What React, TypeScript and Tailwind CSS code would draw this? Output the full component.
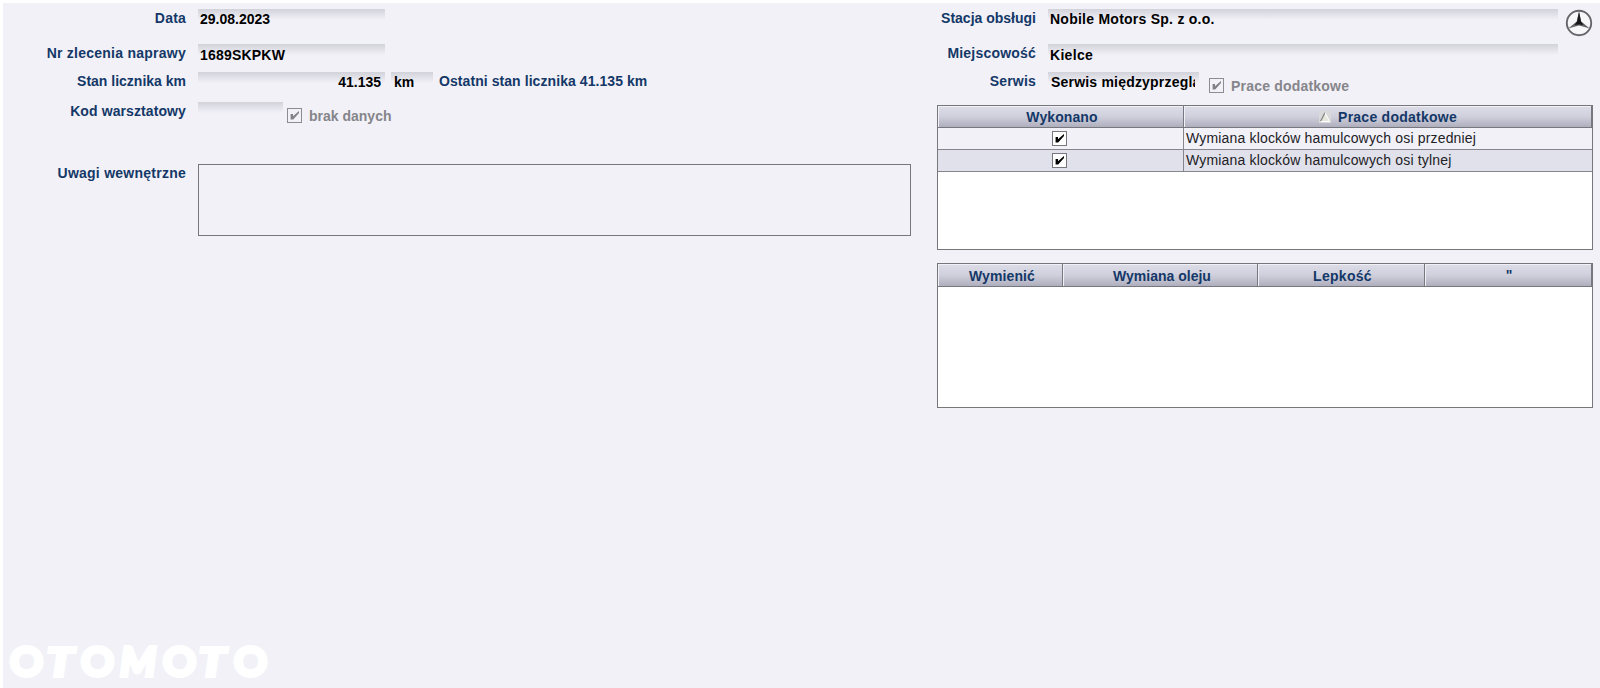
import type { ReactNode } from "react";
import clsx from "clsx";

interface FieldProps {
  className?: string;
  children?: ReactNode;
}

function Label({ className = "", children }: FieldProps) {
  return (
    <div
      className={`shrink-0 pt-px text-right text-[14px] leading-4 font-bold whitespace-nowrap text-[#143867] ${className}`}
    >
      {children}
    </div>
  );
}

function Field({ className = "pt-[3px]", children }: FieldProps) {
  return (
    <div
      className={`h-[22px] shrink-0 overflow-hidden bg-linear-to-b from-[#d2d2da] to-[#f2f1f8] to-[11px] text-[14px] leading-4 font-bold whitespace-nowrap text-black ${className}`}
    >
      {children}
    </div>
  );
}

function CheckBox({ disabled = false }: { disabled?: boolean }) {
  return (
    <svg width="15" height="15" viewBox="0 0 15 15" className="shrink-0">
      <rect
        x="0.5"
        y="0.5"
        width="14"
        height="14"
        fill={disabled ? "#f2f1f8" : "#ffffff"}
        stroke={disabled ? "#8c8c92" : "#77777d"}
      />
      <path
        d="M3.6 6 H6 V8.2 L12 3 V5 L6.2 11.4 H3.6 Z"
        fill={disabled ? "#808085" : "#000000"}
      />
    </svg>
  );
}

function StarLogo() {
  return (
    <svg width="28" height="28" viewBox="0 0 28 28" className="shrink-0">
      <circle cx="14" cy="14" r="12.2" fill="#f7f7fa" stroke="#66666a" strokeWidth="1.9" />
      <path d="M14 2 L16.2 12.4 L24.8 19.6 L14 16.4 L3.2 19.6 L11.8 12.4 Z" fill="#66666a" />
      <path d="M14 3 L16 12.6 L18.6 16 L14 15.4 L9.4 16 L12 12.6 Z" fill="#18181a" />
    </svg>
  );
}

function HeaderCell({ className = "", children }: FieldProps) {
  return (
    <div
      className={`flex h-full items-center justify-center border-r border-b border-r-[#77777f] border-b-[#77777f] bg-linear-to-b from-[#dddde8] via-[#d0d0dd] to-[#aeaebd] text-[14px] leading-4 font-bold whitespace-nowrap text-[#143867] shadow-[inset_1px_1px_0_#f0f0f6] ${className}`}
    >
      {children}
    </div>
  );
}

const jobs = [
  "Wymiana klocków hamulcowych osi przedniej",
  "Wymiana klocków hamulcowych osi tylnej",
];

const letters = [
  { char: "O", className: "w-[37px]" },
  { char: "T", className: "w-[34px] origin-[0_42px] scale-x-[1.15] scale-y-[0.94] italic" },
  { char: "O", className: "w-[39px]" },
  { char: "M", className: "w-[43px] origin-[0_42px] scale-y-[0.96] italic" },
  { char: "O", className: "w-[36px]" },
  { char: "T", className: "w-[35px] origin-[0_42px] scale-x-[1.15] scale-y-[0.94] italic" },
  { char: "O", className: "w-[34px]" },
];

export default function App() {
  return (
    <div className="h-[688px] w-[1600px] overflow-hidden bg-white pt-[3px] pl-[3px] font-['Liberation_Sans',Arial,sans-serif]">
      <main className="relative flex h-full bg-[#f2f1f8] pt-[6px]">
        <section className="w-[934px] shrink-0">
          <div className="flex h-[35px]">
            <Label className="mr-[12px] w-[183px] tracking-[0.2px]">Data</Label>
            <Field className="w-[187px] pt-[2px] pl-[2px]">29.08.2023</Field>
          </div>
          <div className="flex h-[28px]">
            <Label className="mr-[12px] w-[183px] tracking-[0.25px]">Nr zlecenia naprawy</Label>
            <Field className="w-[187px] pt-[3px] pl-[2px] tracking-[0.2px]">1689SKPKW</Field>
          </div>
          <div className="flex h-[30px]">
            <Label className="mr-[12px] w-[183px]">Stan licznika km</Label>
            <Field className="w-[187px] pt-[2px] pr-[4px] text-right">41.135</Field>
            <Field className="ml-[6px] w-[42px] pt-[2px] pl-[3px]">km</Field>
            <Label className="ml-[6px] tracking-[0.07px]">Ostatni stan licznika 41.135 km</Label>
          </div>
          <div className="flex h-[62px]">
            <Label className="mr-[12px] w-[183px] tracking-[0.1px]">Kod warsztatowy</Label>
            <Field className="w-[85px]" />
            <div className="ml-[4px] flex h-[27px] items-center gap-[7px] text-[14px] font-bold text-[#85858a]">
              <CheckBox disabled />
              <span className="leading-4">brak danych</span>
            </div>
          </div>
          <div className="flex">
            <Label className="mr-[12px] w-[183px] tracking-[0.25px]">Uwagi wewnętrzne</Label>
            <div className="h-[72px] w-[713px] border border-[#77777b]" />
          </div>
        </section>

        <section className="w-[656px] shrink-0">
          <div className="flex h-[35px]">
            <Label className="mr-[12px] w-[99px]">Stacja obsługi</Label>
            <Field className="w-[510px] pt-[2px] pl-[2px] tracking-[0.25px]">
              Nobile Motors Sp. z o.o.
            </Field>
            <div className="ml-[7px]">
              <StarLogo />
            </div>
          </div>
          <div className="flex h-[28px]">
            <Label className="mr-[12px] w-[99px] tracking-[0.2px]">Miejscowość</Label>
            <Field className="w-[510px] pt-[3px] pl-[2px] tracking-[0.3px]">Kielce</Field>
          </div>
          <div className="flex h-[33px]">
            <Label className="mr-[12px] w-[99px] tracking-[0.2px]">Serwis</Label>
            <Field className="w-[151px] px-[3px] pt-[2px] tracking-[0.2px]">
              <div className="w-[144px] overflow-hidden">Serwis międzyprzeglą</div>
            </Field>
            <div className="ml-[10px] flex h-[27px] items-center gap-[7px] text-[14px] font-bold tracking-[0.2px] text-[#85858a]">
              <CheckBox disabled />
              <span className="leading-4">Prace dodatkowe</span>
            </div>
          </div>

          <div className="h-[145px] border border-[#77777b] bg-white">
            <div className="flex h-[22px]">
              <HeaderCell className="w-[246px] pl-[3px] tracking-[0.1px]">Wykonano</HeaderCell>
              <HeaderCell className="flex-1 gap-[7px] pl-px tracking-[0.25px]">
                <svg width="12" height="12" viewBox="0 0 12 12">
                  <rect width="12" height="12" fill="#d9d9d9" />
                  <path d="M1.5 10.5 L6 1.5 L10.5 10.5 Z" fill="#e6e6da" />
                  <path d="M1.5 10.5 L6 1.5" stroke="#85858a" strokeWidth="1.2" />
                  <path d="M6 1.5 L10.5 10.5 H1.5" stroke="#ffffff" fill="none" />
                </svg>
                Prace dodatkowe
              </HeaderCell>
            </div>
            {jobs.map((job, i) => (
              <div
                key={job}
                className={clsx(
                  "flex h-[22px] border-b border-[#85858b] text-[14px] leading-[20px] tracking-[0.17px] text-[#222226]",
                  i % 2 ? "bg-[#e1e1eb]" : "bg-[#f2f1f8]",
                )}
              >
                <div className="flex w-[246px] items-center justify-center border-r border-[#85858b] pr-[2px]">
                  <CheckBox />
                </div>
                <div className="flex-1 pl-[2px] whitespace-nowrap">{job}</div>
              </div>
            ))}
          </div>

          <div className="mt-[13px] h-[145px] border border-[#77777b] bg-white">
            <div className="flex h-[23px]">
              <HeaderCell className="w-[125px] pt-px pl-[4px] tracking-[0.1px]">Wymienić</HeaderCell>
              <HeaderCell className="w-[195px] pt-px pl-[4px]">Wymiana oleju</HeaderCell>
              <HeaderCell className="w-[167px] pt-px pl-[3px] tracking-[0.3px]">Lepkość</HeaderCell>
              <HeaderCell className="flex-1 pl-[2px]">&quot;</HeaderCell>
            </div>
          </div>
        </section>

        {/* watermark */}
        <div className="absolute top-[632px] left-[7px] flex items-baseline font-[Lato,sans-serif] text-[41px] leading-[52px] font-bold text-white [-webkit-text-stroke:4px_white]">
          {letters.map((letter, i) => (
            <span key={i} className={letter.className}>
              {letter.char}
            </span>
          ))}
        </div>
      </main>
    </div>
  );
}
